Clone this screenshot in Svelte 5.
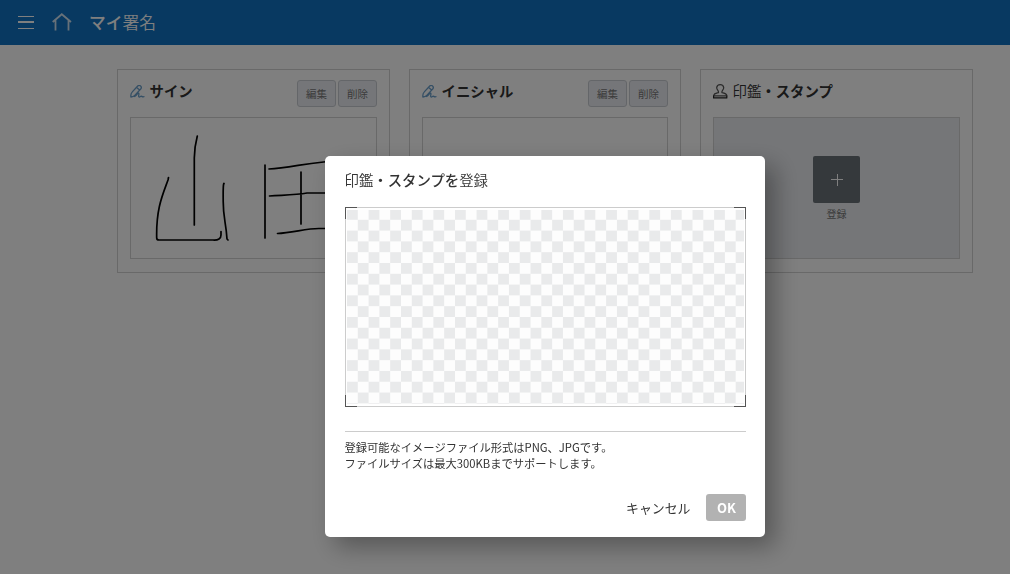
<script>
  const cards = [
    { icon: 'pen', title: [['サイン', false]], drawn: true },
    { icon: 'pen', title: [['イニシャル', false]], drawn: false },
    { icon: 'stamp', title: [['印鑑', true], ['・スタンプ', false]], empty: true }
  ];
  const corners = ['tl', 'tr', 'bl', 'br'];
</script>

<div class="page">
  <header>
    <svg class="menu" width="16" height="13" viewBox="0 0 16 13" stroke="#fff" fill="none">
      <path d="M0 .5H16M0 12.500H16" stroke-width="1" />
      <path d="M0 6H16" stroke-width="2" />
    </svg>
    <svg class="home" width="20" height="18" viewBox="0 0 20 18" stroke="#fff" stroke-opacity=".8" fill="none" stroke-width="1.8">
      <path d="M.7 9L9.800 1.300L19 9M3.500 7V17.500M16.500 7V17.500" />
    </svg>
    <h1>マイ<span class="han">署名</span></h1>
  </header>
  <main>
    {#each cards as card}
      <section class="card">
        <div class="head">
          {#if card.icon === 'pen'}
            <svg class="icon" width="15" height="14" viewBox="0 0 15 14" fill="none" stroke="#6b9fca" stroke-width="1.3" stroke-linecap="round" stroke-linejoin="round">
              <path d="M.9 12C.6 9.800 1 8.200 2.300 6.900L7.500 1.300C8.400.3 9.700.3 10.600 1.100C11.500 1.900 11.500 3 10.700 4L5 10.100C3.900 11.300 2.600 11.900.9 12ZM6.700 2.400L9.600 4.900M4.400 11.500C6.300 10.800 7.300 8.300 8.500 8.200C9.800 8.200 7.800 11.500 9 12C10 12.400 10.600 10.900 11.300 11.100C12 11.400 12.300 12.200 14 11.700" />
            </svg>
          {:else}
            <svg class="icon stamp" width="15" height="15" viewBox="0 0 15 15" fill="none" stroke="#555" stroke-width="1.200" stroke-linejoin="round">
              <path d="M5.400 8.700C6.200 6.700 3.600 5.800 3.700 3.600C3.900 1.600 5.300.6 7.200.6C9.100.6 10.500 1.600 10.700 3.600C10.800 5.800 8.200 6.700 9 8.700C11.500 9.300 13.600 9.300 13.900 11.800H.5C.8 9.300 2.900 9.300 5.400 8.700Z" />
              <path d="M.6 11.800V13.900H13.800V11.800" stroke="#222" stroke-width="1.2" />
            </svg>
          {/if}
          <h2>{#each card.title as [text, han]}<span class:han>{text}</span>{/each}</h2>
          {#if !card.empty}
            <div class="tools"><button>編集</button><button>削除</button></div>
          {/if}
        </div>
        <div class="slot" class:empty={card.empty}>
          {#if card.drawn}
            <svg width="245" height="140" viewBox="131 118 245 140" fill="none" stroke="#000" stroke-width="1.7" stroke-linecap="round" stroke-linejoin="round">
              <path d="M197.300 136C195.500 143 194.300 150 194.300 158V225M168.500 177.500L168 180C163 194 156 208 156.700 238Q156.700 240 159 240H213Q221 240.500 221 235V231.500M224 183.500Q223 183 223.200 200C223 218 226 222 227 239L228 240M265 165V238M269 169C290 168 310 162 345 160M269.500 196C285 195 296 195 307 193H345M301 172V224M277.500 233.500C292 233 308 228 320 228.500H345" />
            </svg>
          {/if}
          {#if card.empty}
            <button class="add" aria-label="登録"><svg width="12" height="12" viewBox="0 0 12 12" stroke="#fff"><path d="M6.500 0V12M0 5.500H12" /></svg></button>
            <span class="caption">登録</span>
          {/if}
        </div>
      </section>
    {/each}
  </main>
</div>

<div class="overlay">
  <div class="dialog" role="dialog">
    <h3><span class="han">印鑑</span>・スタンプを<span class="han">登録</span></h3>
    <div class="canvas">
      <div class="checker"></div>
      {#each corners as corner}<i class={corner}></i>{/each}
    </div>
    <div class="note">
      <p>登録可能なイメージファイル形式はPNG、JPGです。</p>
      <p>ファイルサイズは最大300KBまでサポートします。</p>
    </div>
    <div class="actions">
      <button class="cancel">キャンセル</button>
      <button class="ok">OK</button>
    </div>
  </div>
</div>

<style>
  :global(body) { background: #fff; overflow: hidden; }
  * { box-sizing: border-box; }
  .page, .overlay, button { font-family: "Noto Sans CJK JP", sans-serif; }
  h1, h2, h3, p { margin: 0; white-space: nowrap; }
  .page { height: 574px; color: #333; }
  header { height: 45px; background: #1072c2; display: flex; align-items: center; padding-left: 18px; color: #fff; }
  .menu { display: block; }
  .home { margin: 0 0 2px 18px; }
  h1 { margin: 0 0 2px 17px; font-size: 16.800px; line-height: 24px; font-weight: 500; }
  .han { font-weight: 350; }
  main { display: grid; grid-template-columns: 273px 272px 273px; gap: 19px; padding: 24px 0 0 117px; }
  .card { height: 204px; border: 1px solid #d2d2d2; padding: 0 12px; }
  .head { height: 47px; display: flex; align-items: flex-start; padding-top: 10px; }
  .icon { margin-top: 5px; flex: none; }
  .icon.stamp { margin-top: 4px; }
  h2 { font-size: 14.400px; line-height: 22px; font-weight: 700; margin: 0 0 0 4.500px; }
  .tools { margin-left: auto; display: flex; gap: 2px; }
  .tools button { width: 39px; height: 27px; padding: 0; border: 1px solid #c9cdd2; border-radius: 3px; background: #eaedf2; color: #777; font-size: 10.500px; line-height: 25px; }
  .slot { height: 142px; border: 1px solid #d2d2d2; display: flex; flex-direction: column; align-items: center; }
  .slot > svg { display: block; flex: none; }
  .slot.empty { background: #eaecf0; padding-top: 38px; }
  .add { width: 47px; height: 47px; border: 0; border-radius: 2px; background: #6b7378; padding: 0; display: grid; place-items: center; }
  .caption { font-size: 10px; line-height: 14px; margin-top: 4px; color: #777; }
  .overlay { position: fixed; inset: 0; background: rgba(0, 0, 0, .5); }
  .dialog { width: 440px; height: 381px; padding: 13px 19px 0 20px; margin: 156px 0 0 325px; border-radius: 5px; background: #fff; box-shadow: 10px 10px 25px rgba(0, 0, 0, .32); color: #333; }
  h3 { font-size: 14.400px; line-height: 22px; font-weight: 500; margin-left: -.5px; }
  .canvas { position: relative; height: 200px; margin-top: 16px; border: 1px solid #ccc; padding: 2px 1px; }
  .checker { height: 194px; background: repeating-conic-gradient(#fdfdfd 0 25%, #e9eaeb 0 50%) 0 -1px / 21.600px 21.600px; }
  .canvas i { position: absolute; width: 12px; height: 12px; border: 0 solid #555; }
  .canvas .tl { left: -1px; top: -1px; border-width: 1px 0 0 1px; }
  .canvas .tr { right: -1px; top: -1px; border-width: 1px 1px 0 0; }
  .canvas .bl { left: -1px; bottom: -1px; border-width: 0 0 1px 1px; }
  .canvas .br { right: -1px; bottom: -1px; border-width: 0 1px 1px 0; }
  .note { margin-top: 24px; padding-top: 7px; border-top: 1px solid #ccc; font-size: 11.280px; line-height: 16px; }
  .note p { margin-left: -.5px; }
  .actions { display: flex; justify-content: flex-end; align-items: center; margin-top: 23px; gap: 15.500px; }
  .actions button { height: 27px; padding: 0; border: 0; font-size: 13px; line-height: 27px; }
  .actions .cancel { background: none; color: #333; font-size: 12.900px; }
  .actions .ok { width: 40px; border-radius: 3px; background: #b2b2b2; color: #fff; font-weight: 700; padding-left: 1px; }
</style>
